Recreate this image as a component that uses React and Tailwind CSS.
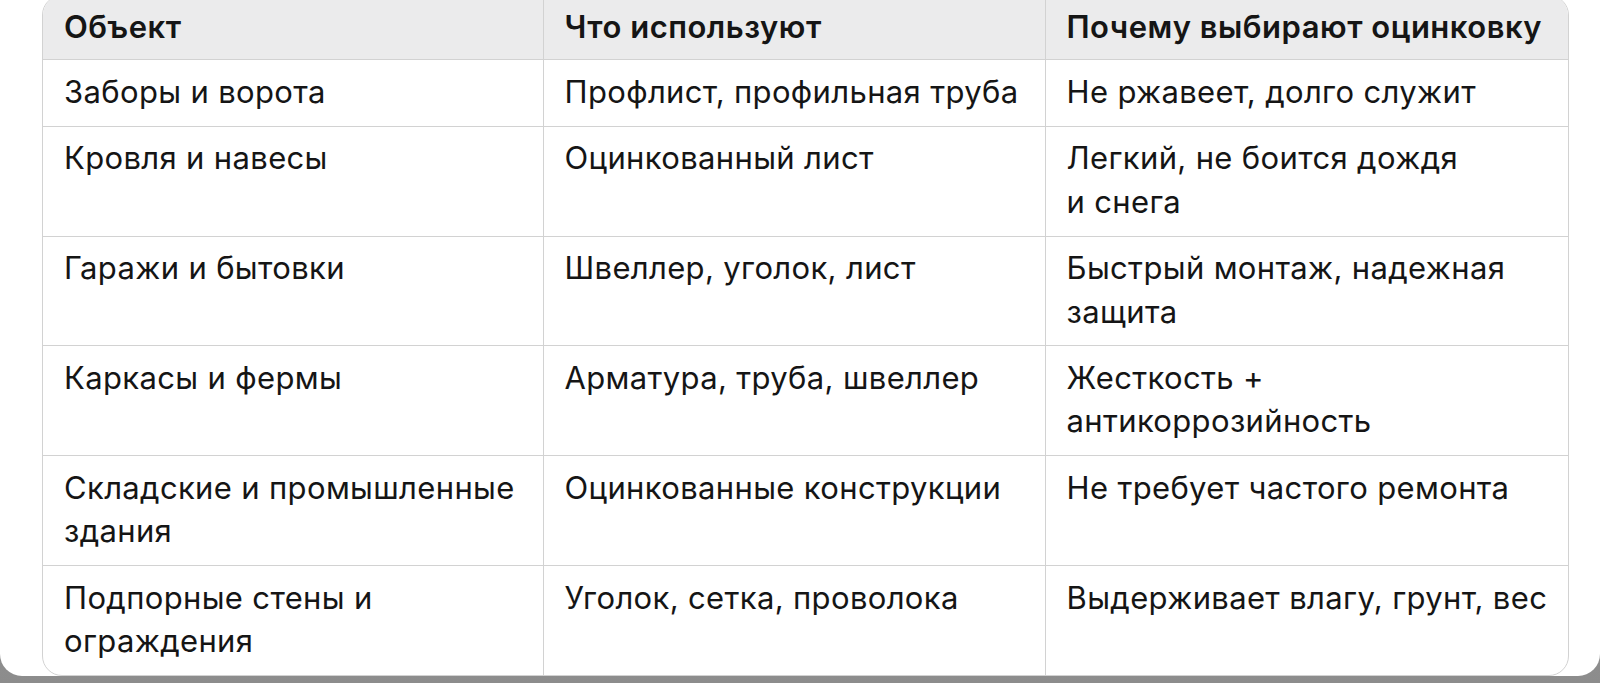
const rows = [
  ['Заборы и ворота', 'Профлист, профильная труба', 'Не ржавеет, долго служит'],
  ['Кровля и навесы', 'Оцинкованный лист', ['Легкий, не боится дождя', 'и снега']],
  ['Гаражи и бытовки', 'Швеллер, уголок, лист', ['Быстрый монтаж, надежная', 'защита']],
  ['Каркасы и фермы', 'Арматура, труба, швеллер', ['Жесткость +', 'антикоррозийность']],
  [['Складские и промышленные', 'здания'], 'Оцинкованные конструкции', 'Не требует частого ремонта'],
  [['Подпорные стены и', 'ограждения'], 'Уголок, сетка, проволока', 'Выдерживает влагу, грунт, вес'],
];

function Cell({ value, first }) {
  const lines = Array.isArray(value) ? value : [value];
  return (
    <td className={`align-top px-[21px] pt-[9.5px] pb-[12.5px] leading-[43.4px] whitespace-nowrap ${first ? '' : 'border-l border-[#d2d2d2]'}`}>
      {lines.map((l, i) => (
        <div key={i}>{l}</div>
      ))}
    </td>
  );
}

export default function App() {
  return (
    <div className="w-[1600px] h-[683px] overflow-hidden bg-gradient-to-b from-[#b4b4b4] to-[#8c8c8c]">
      <div className="h-[676px] bg-white rounded-b-[22px] overflow-hidden">
        <div
          className="ml-[42px] -mt-[5px] w-[1527px] border border-[#d2d2d2] rounded-[20px] overflow-hidden text-[#151515] text-[31px] tracking-[0.35px]"
          style={{ fontFamily: 'Inter, "Noto Sans", sans-serif' }}
        >
          <table className="w-full table-fixed border-collapse">
            <colgroup>
              <col className="w-[500px]" />
              <col className="w-[502px]" />
              <col />
            </colgroup>
            <thead>
              <tr className="bg-[#ebebec]">
                {['Объект', 'Что используют', 'Почему выбирают оцинковку'].map((h, i) => (
                  <th
                    key={h}
                    className={`text-left font-semibold tracking-[0.5px] px-[21px] pt-[9px] pb-[11px] leading-[43.4px] whitespace-nowrap ${i ? 'border-l border-[#d2d2d2]' : ''}`}
                  >
                    {h}
                  </th>
                ))}
              </tr>
            </thead>
            <tbody>
              {rows.map((r, i) => (
                <tr key={i} className="border-t border-[#d2d2d2]">
                  {r.map((c, j) => (
                    <Cell key={j} value={c} first={j === 0} />
                  ))}
                </tr>
              ))}
            </tbody>
          </table>
        </div>
      </div>
    </div>
  );
}
